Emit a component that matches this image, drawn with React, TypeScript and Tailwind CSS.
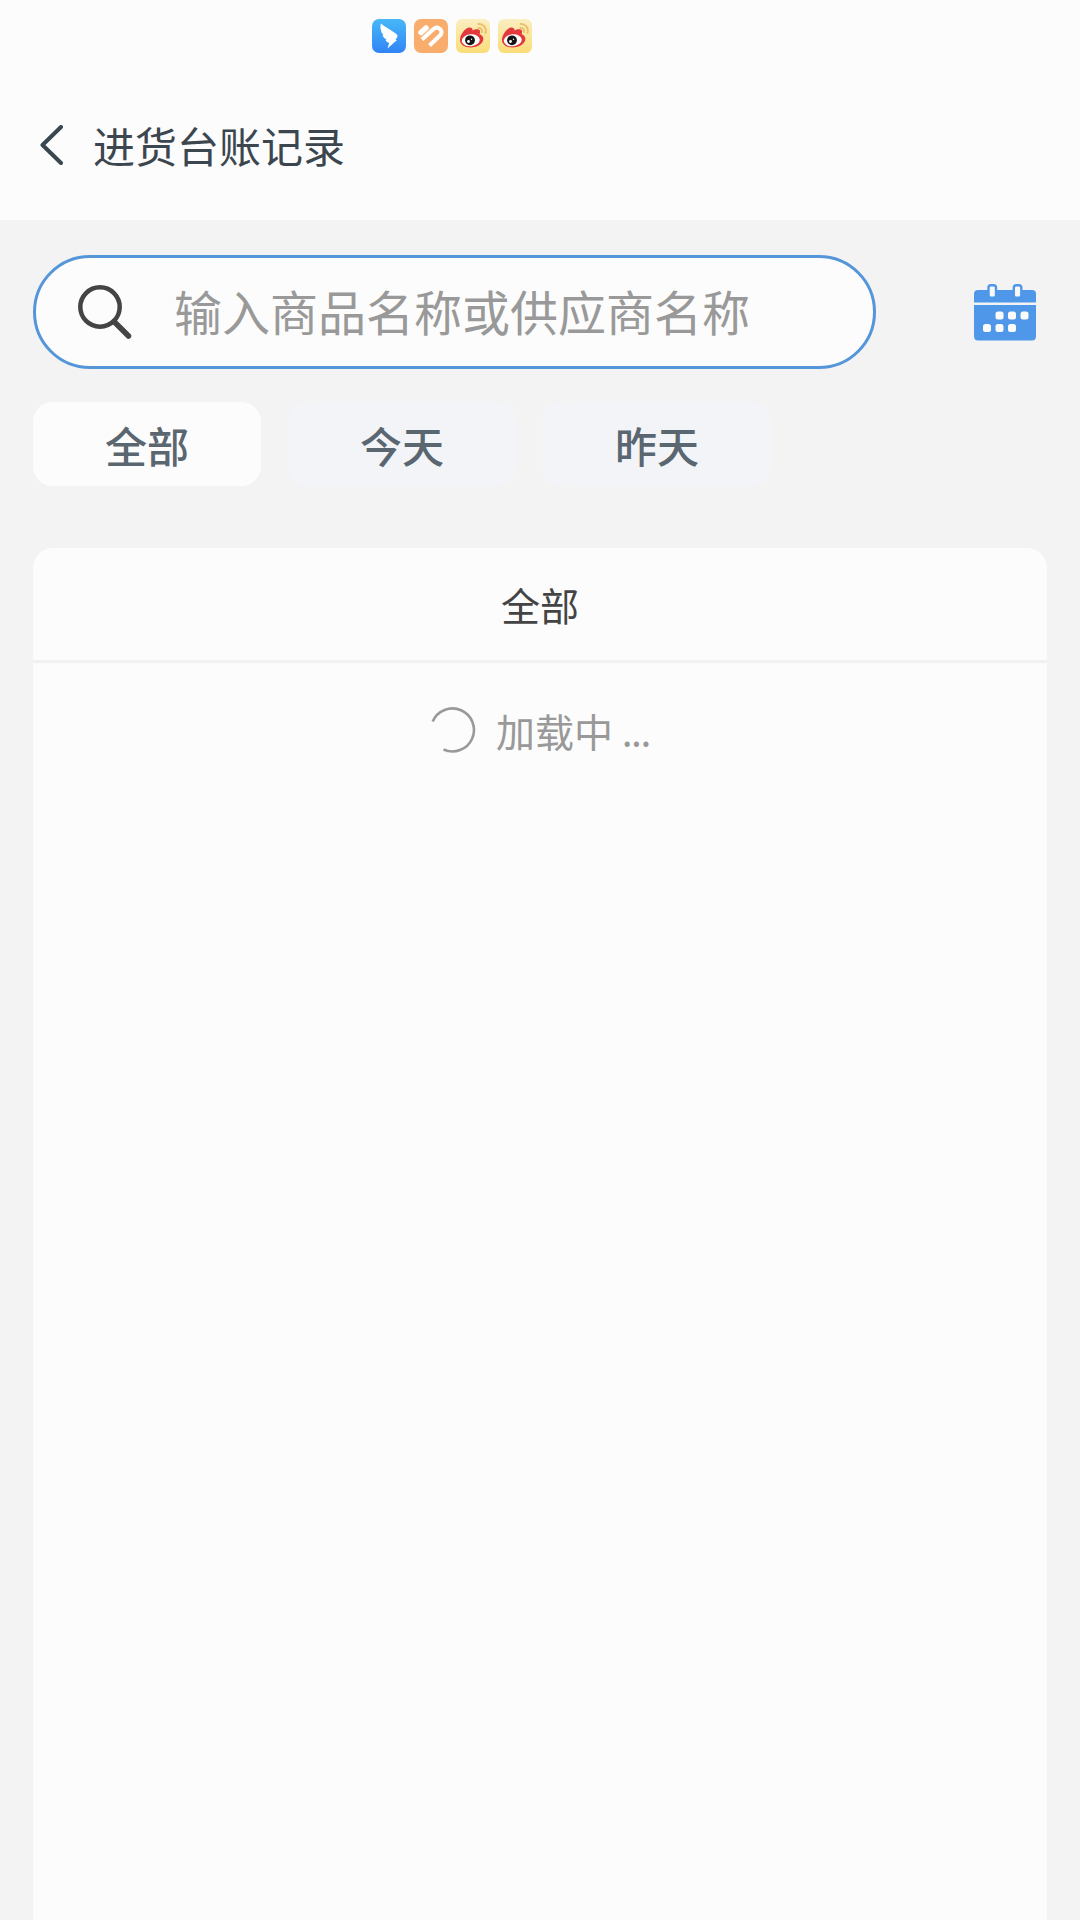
import React, { useState } from 'react';

const tabs = ['全部', '今天', '昨天'];

const WingIcon = () => (
  <svg width="34" height="34" viewBox="0 0 34 34">
    <defs>
      <linearGradient id="wing-bg" x1="0" y1="0" x2="0" y2="1">
        <stop offset="0" stopColor="#46b8f8" />
        <stop offset="1" stopColor="#3284f5" />
      </linearGradient>
    </defs>
    <rect width="34" height="34" rx="7" fill="url(#wing-bg)" />
    <path
      d="M9 4.5C12 7.500 16 9 20 12C23 14 26 15.500 25.500 17.500L23.500 21H25L15.500 29.500L17.200 23.800C15.500 23.500 14 22.500 13.500 20.800L15 20.500C12.500 19.500 11 18 10.500 16.200L11.800 16.200C10 14.500 9.200 13 9 11.200C8.200 9 8.300 6.500 9 4.500Z"
      fill="#fff"
    />
  </svg>
);

const HeartIcon = () => (
  <svg width="34" height="34" viewBox="0 0 34 34">
    <rect width="34" height="34" rx="7" fill="#f9ad6d" />
    <g fill="none" stroke="#fff" strokeLinejoin="round">
      <path d="M7 13.500L12 9" strokeWidth="5.500" strokeLinecap="round" />
      <path d="M8 20.500L19.500 10C24 6.500 30 11.500 26.500 16L15.500 26.500" strokeWidth="4" />
    </g>
  </svg>
);

const EyeIcon = () => (
  <svg width="34" height="34" viewBox="0 0 34 34">
    <defs>
      <linearGradient id="eye-bg" x1="0" y1="0" x2="0" y2="1">
        <stop offset="0" stopColor="#faefc2" />
        <stop offset="1" stopColor="#fadc78" />
      </linearGradient>
    </defs>
    <rect width="34" height="34" rx="6" fill="url(#eye-bg)" />
    <path
      d="M4 21C4 16 8.500 10 12 8.800C15 8 17 9.500 16.500 11.500C19 10 23.500 9.500 24 12C24.300 13.500 23.700 14.500 23.700 15.200C27 16.500 28 19 27 21.800C25.500 26 20 28.500 14.500 28.500C8.500 28.500 4 25.500 4 21Z"
      fill="#e3393d"
    />
    <ellipse cx="14.800" cy="21.300" rx="9" ry="6" fill="#fff" transform="rotate(-6 14.8 21.3)" />
    <circle cx="14" cy="21.300" r="4.900" fill="#151515" />
    <circle cx="12.500" cy="22.500" r="1.400" fill="#fff" />
    <circle cx="15.500" cy="20.300" r="0.700" fill="#fff" />
    <g fill="none" stroke="#ecc06c" strokeWidth="2" strokeLinecap="round">
      <path d="M22.500 5C27 4.500 31 9 29.500 14" />
      <path d="M22.500 9C25 8.800 26.500 10.700 26 13" />
    </g>
  </svg>
);

const CalendarIcon = () => (
  <svg width="62" height="57" viewBox="0 0 62 57">
    <path d="M4 6H58Q62 6 62 10V18.500H0V10Q0 6 4 6Z" fill="#4f98e9" />
    <path d="M0 21H62V52Q62 56.500 58 56.500H4Q0 56.500 0 52Z" fill="#4f98e9" />
    <rect x="14.500" y="1.200" width="7.500" height="12.500" rx="2.500" fill="#f8f8f8" stroke="#4f98e9" strokeWidth="2.400" />
    <rect x="39.800" y="1.200" width="7.500" height="12.500" rx="2.500" fill="#f8f8f8" stroke="#4f98e9" strokeWidth="2.400" />
    <g fill="#fbfbfb">
      <rect x="21.500" y="27.500" width="8" height="8" rx="2.500" />
      <rect x="34" y="27.500" width="8" height="8" rx="2.500" />
      <rect x="46.500" y="27.500" width="8" height="8" rx="2.500" />
      <rect x="9" y="40" width="8" height="8" rx="2.500" />
      <rect x="21.500" y="40" width="8" height="8" rx="2.500" />
      <rect x="34" y="40" width="8" height="8" rx="2.500" />
    </g>
  </svg>
);

export default function App() {
  const [active, setActive] = useState('全部');

  return (
    <div className="flex h-[1920px] w-[1080px] flex-col overflow-hidden bg-[#f3f3f3] font-['Noto_Sans_CJK_SC',sans-serif]">
      {/* Status bar + header */}
      <header className="h-[220px] shrink-0 bg-[#fcfcfc]">
        <div className="flex h-[71px] gap-2 pt-[19px] pl-[372px]">
          <WingIcon />
          <HeartIcon />
          <EyeIcon />
          <EyeIcon />
        </div>
        <div className="flex h-[148px] items-center pl-10">
          <button className="mr-[30px]">
            <svg width="23" height="40" viewBox="0 0 23 40" fill="none">
              <path d="M21 2L2.500 20L21 38" stroke="#38474f" strokeWidth="4" strokeLinecap="round" strokeLinejoin="round" />
            </svg>
          </button>
          <h1 className="pb-px text-[42px] leading-[60px] text-[#3b464f]">进货台账记录</h1>
        </div>
      </header>

      {/* Search */}
      <div className="mt-[35px] flex items-center justify-between pr-11 pl-[33px]">
        <label className="flex h-[114px] w-[843px] items-center rounded-full border-3 border-[#5596da] bg-[#fcfcfc] pl-[42px]">
          <svg width="54" height="56" viewBox="0 0 54 56" fill="none" stroke="#444" className="shrink-0">
            <circle cx="22" cy="23" r="19.700" strokeWidth="4.500" />
            <path d="M36 37.500L50.500 52" strokeWidth="5.500" strokeLinecap="round" />
          </svg>
          <input
            className="ml-[42px] w-[620px] pb-1 text-[48px] leading-[70px] outline-none placeholder:text-[#999]"
            placeholder="输入商品名称或供应商名称"
          />
        </label>
        <button>
          <CalendarIcon />
        </button>
      </div>

      <div className="mt-[33px] flex gap-[27px] px-[33px]">
        {tabs.map((tab) => (
          <button
            key={tab}
            onClick={() => setActive(tab)}
            className={`h-[84px] w-[228px] rounded-[20px] pt-px text-[42px] leading-[84px] font-medium text-[#5a6670] ${
              active === tab ? 'bg-[#fcfcfc]' : 'bg-[#f2f4f7]'
            }`}
          >
            {tab}
          </button>
        ))}
      </div>

      {/* Record list */}
      <main className="mx-[33px] mt-[62px] flex-1 rounded-t-[20px] bg-[#fcfcfc]">
        <div className="flex h-[115px] items-center justify-center border-b-3 border-[#f1f1f1] pt-px text-[39px] text-[#444]">
          {active}
        </div>
        <div className="flex items-center pt-[39px] pl-[397px] text-[39px] leading-[56px] text-[#999]">
          <svg width="46" height="48" viewBox="0 0 46 48" fill="none">
            <path d="M2.700 15.500A21.500 21.500 0 1 1 13.500 43.500" stroke="#999" strokeWidth="2.600" />
          </svg>
          <span className="ml-5">
            加载中 <span className="tracking-[-1.5px]">...</span>
          </span>
        </div>
      </main>
    </div>
  );
}
